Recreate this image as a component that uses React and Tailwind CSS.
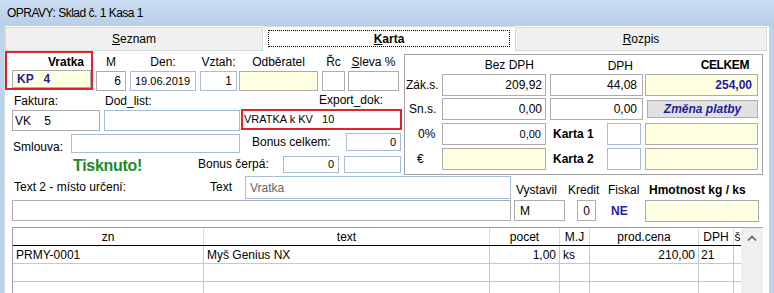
import React from "react";

/* ---------- field helpers ---------- */
const GRAY = "border border-[#acacac]";
const BLUE = "border border-[#a6bcda]";

const Field = ({ className = "", children }) => (
    <div className={"flex items-center overflow-hidden whitespace-pre " + className}>{children}</div>
);

const Col = ({ className = "", label, children }) => (
    <div className={"flex flex-col " + className}>
        <div className="h-[20px] pt-[2px] flex items-center justify-center whitespace-pre">{label}</div>
        {children}
    </div>
);

const Tab = ({ className = "", children }) => (
    <div className={"flex items-center justify-center " + className}>{children}</div>
);

const cols = "grid grid-cols-[191px_286px_70px_30px_109px_35px_8px]";

const rows = [
    { zn: "PRMY-0001", text: "Myš Genius NX", pocet: "1,00", mj: "ks", cena: "210,00", dph: "21" },
    { zn: "", text: "", pocet: "", mj: "", cena: "", dph: "" },
    { zn: "", text: "", pocet: "", mj: "", cena: "", dph: "" },
];

export default function App() {
    return (
        <div className="w-[774px] h-[293px] overflow-hidden bg-[#bcd3ec] flex flex-col text-black text-[12px] leading-none font-['Liberation_Sans',Arial,sans-serif]">
            {/* Title bar */}
            <div className="h-[26px] shrink-0 pl-[7px] flex items-center bg-linear-to-b from-[#cbddf2] to-[#b8cfe9] text-[12px] tracking-[-0.5px]">
                OPRAVY: Sklad č. 1 Kasa 1
            </div>

            {/* Window body */}
            <div className="ml-[4px] w-[765px] flex-1 bg-white border-l border-[#d6d6d6] flex flex-col">
                {/* Tabs */}
                <div className="h-[25px] shrink-0 flex items-end">
                    <Tab className="w-[258px] h-[24px] bg-[#f0f0f0] border border-[#d9d9d9]">
                        <span>
                            <span className="underline">S</span>eznam
                        </span>
                    </Tab>
                    <div className="w-[252px] h-[25px] bg-white border-t border-[#d9d9d9] px-[5px] pt-[3px] pb-[4px]">
                        <Tab className="h-full border border-dotted border-black font-bold">
                            <span>
                                <span className="underline">K</span>arta
                            </span>
                        </Tab>
                    </div>
                    <Tab className="w-[252px] h-[24px] bg-[#f0f0f0] border border-[#d9d9d9]">
                        <span>
                            <span className="underline">R</span>ozpis
                        </span>
                    </Tab>
                </div>

                {/* Top section */}
                <div className="flex h-[125px] shrink-0">
                    {/* Left part */}
                    <div className="w-[399px] flex flex-col">
                        {/* Row A */}
                        <div className="flex items-start h-[40px]">
                            <div className="w-[88px] h-[39px] border-2 border-[#e1232b] flex flex-col">
                                <div className="h-[17px] flex items-center justify-end pr-[7px] font-bold">Vratka</div>
                                <Field className={"ml-[5px] w-[79px] h-[18px] pl-[4px] bg-[#ffffe1] font-bold text-[#1e1e9e] " + GRAY}>
                                    KP   4
                                </Field>
                            </div>
                            <Col className="ml-[3px] w-[30px]" label="M">
                                <Field className={"h-[20px] justify-end pr-[4px] " + GRAY}>6</Field>
                            </Col>
                            <Col className="ml-[4px] w-[66px]" label="Den:">
                                <Field className={"h-[20px] pl-[4px] text-[11px] " + BLUE}>19.06.2019</Field>
                            </Col>
                            <Col className="ml-[4px] w-[37px]" label="Vztah:">
                                <Field className={"h-[20px] justify-end pr-[4px] " + BLUE}>1</Field>
                            </Col>
                            <Col className="ml-[2px] w-[79px]" label="Odběratel">
                                <Field className={"h-[20px] bg-[#ffffe1] " + GRAY} />
                            </Col>
                            <Col className="ml-[4px] w-[23px]" label="Řc">
                                <Field className={"h-[20px] " + GRAY} />
                            </Col>
                            <Col
                                className="ml-[3px] w-[51px]"
                                label={
                                    <span>
                                        <span className="underline">S</span>leva %
                                    </span>
                                }
                            >
                                <Field className={"h-[20px] " + GRAY} />
                            </Col>
                        </div>

                        {/* Row B */}
                        <div className="flex items-start h-[40px]">
                            <div className="ml-[7px] w-[88px] flex flex-col">
                                <div className="h-[19px] flex items-center pl-[2px]">Faktura:</div>
                                <Field className={"h-[21px] pl-[2px] " + GRAY}>VK    5</Field>
                            </div>
                            <div className="ml-[4px] w-[136px] flex flex-col">
                                <div className="h-[19px] flex items-center pl-[1px]">Dod_list:</div>
                                <Field className={"h-[21px] " + BLUE} />
                            </div>
                            <div className="ml-[1px] w-[161px] flex flex-col">
                                <div className="h-[18px] flex items-center justify-end pr-[19px]">Export_dok:</div>
                                <Field className="h-[21px] pl-[1px] border-2 border-[#e1232b] text-[11px]">VRATKA k KV   10</Field>
                            </div>
                        </div>

                        {/* Row C */}
                        <div className="flex items-start h-[23px]">
                            <div className="ml-[8px] w-[58px] mt-[8px] h-[16px] flex items-center">Smlouva:</div>
                            <Field className={"mt-[3px] w-[169px] h-[19px] " + BLUE} />
                            <div className="ml-[12px] w-[94px] mt-[3px] h-[16px] flex items-center">Bonus celkem:</div>
                            <Field className={"mt-[2px] w-[55px] h-[18px] justify-end pr-[4px] text-[11px] " + BLUE}>0</Field>
                        </div>

                        {/* Row D */}
                        <div className="flex items-start h-[22px]">
                            <div className="ml-[68px] w-[125px] mt-[2px] h-[20px] flex items-center font-bold text-[16px] tracking-[-0.3px] text-[#23882a]">
                                Tisknuto!
                            </div>
                            <div className="w-[85px] mt-[2px] h-[16px] flex items-center">Bonus čerpá:</div>
                            <Field className={"mt-[2px] w-[56px] h-[17px] justify-end pr-[4px] text-[11px] " + BLUE}>0</Field>
                            <Field className={"ml-[5px] mt-[2px] w-[57px] h-[17px] " + BLUE} />
                        </div>
                    </div>

                    {/* Totals box */}
                    <div className="mt-[3px] w-[359px] h-[121px] border border-[#a0a0a0] flex flex-col">
                        <div className="h-[19px] flex">
                            <div className="w-[37px]" />
                            <div className="w-[104px] flex items-center justify-end pr-[12px]">Bez DPH</div>
                            <div className="ml-[4px] w-[93px] flex items-center justify-end pr-[10px] pt-[3px]">DPH</div>
                            <div className="ml-[2px] w-[113px] flex items-center justify-end pr-[9px] font-bold tracking-[-0.4px]">CELKEM</div>
                        </div>
                        <div className="h-[22px] flex items-center">
                            <div className="w-[37px] pl-[1px]">Zák.s.</div>
                            <Field className={"w-[104px] h-[22px] justify-end pr-[3px] " + GRAY}>209,92</Field>
                            <Field className={"ml-[4px] w-[93px] h-[22px] justify-end pr-[5px] " + GRAY}>44,08</Field>
                            <Field className={"ml-[2px] w-[113px] h-[22px] justify-end pr-[5px] bg-[#ffffe1] font-bold text-[#1e1e9e] " + GRAY}>
                                254,00
                            </Field>
                        </div>
                        <div className="mt-[2px] h-[22px] flex items-center">
                            <div className="w-[37px] pl-[4px]">Sn.s.</div>
                            <Field className={"w-[104px] h-[22px] justify-end pr-[3px] " + GRAY}>0,00</Field>
                            <Field className={"ml-[4px] w-[93px] h-[22px] justify-end pr-[5px] " + GRAY}>0,00</Field>
                            <div className="ml-[4px] w-[111px] h-[18px] bg-[#e1e1e1] border border-[#adadad] flex items-center justify-center font-bold italic text-[#1e1e9e]">
                                Změna platby
                            </div>
                        </div>
                        <div className="mt-[3px] h-[22px] flex items-center">
                            <div className="w-[37px] pl-[13px]">0%</div>
                            <Field className={"w-[104px] h-[22px] justify-end pr-[4px] text-[11px] " + GRAY}>0,00</Field>
                            <div className="w-[61px] pl-[7px] font-bold">Karta 1</div>
                            <Field className={"w-[34px] h-[22px] " + BLUE} />
                            <Field className={"ml-[4px] w-[113px] h-[22px] bg-[#ffffe1] " + GRAY} />
                        </div>
                        <div className="mt-[3px] h-[22px] flex items-center">
                            <div className="w-[37px] pl-[12px]">€</div>
                            <Field className={"w-[104px] h-[22px] bg-[#ffffe1] " + GRAY} />
                            <div className="w-[61px] pl-[7px] font-bold">Karta 2</div>
                            <Field className={"w-[34px] h-[22px] " + BLUE} />
                            <Field className={"ml-[4px] w-[113px] h-[22px] bg-[#ffffe1] " + GRAY} />
                        </div>
                    </div>
                </div>

                {/* Row E */}
                <div className="flex items-start h-[24px] shrink-0">
                    <div className="ml-[9px] w-[196px] h-[22px] flex items-center">Text 2 - místo určení:</div>
                    <div className="w-[35px] h-[22px] flex items-center">Text</div>
                    <Field className={"w-[266px] h-[23px] pl-[4px] text-[#666] " + BLUE}>Vratka</Field>
                    <div className="ml-[5px] mt-[3px] h-[22px] flex items-center">
                        <div className="w-[52px]">Vystavil</div>
                        <div className="w-[40px]">Kredit</div>
                        <div className="w-[41px]">Fiskal</div>
                        <div className="font-bold">Hmotnost kg / ks</div>
                    </div>
                </div>

                {/* Row F */}
                <div className="flex items-start h-[22px] shrink-0">
                    <Field className={"ml-[7px] w-[499px] h-[21px] " + GRAY} />
                    <Field className={"ml-[3px] w-[51px] h-[21px] pl-[5px] " + GRAY}>M</Field>
                    <Field className={"ml-[12px] w-[19px] h-[21px] justify-center " + GRAY}>0</Field>
                    <div className="ml-[15px] w-[34px] h-[21px] flex items-center font-bold text-[#1e1e9e]">NE</div>
                    <Field className={"w-[114px] h-[22px] bg-[#ffffe1] " + GRAY} />
                </div>

                {/* Grid */}
                <div className="mt-[5px] ml-[7px] w-[751px] flex flex-1 min-h-0 overflow-hidden">
                    <div className="w-[729px] border-t border-l border-[#a0a0a0] flex flex-col">
                        <div className={cols + " h-[18px] shrink-0 border-b border-black"}>
                            {["zn", "text", "pocet", "M.J", "prod.cena", "DPH", "š"].map((h, i) => (
                                <div
                                    key={i}
                                    className="border-r border-[#dcdcdc] flex items-center justify-center overflow-hidden whitespace-nowrap"
                                >
                                    {h}
                                </div>
                            ))}
                        </div>
                        {rows.map((r, i) => (
                            <div key={i} className={cols + " h-[18px] shrink-0 border-b border-[#c8c8c8]"}>
                                <div className="border-r border-[#c8c8c8] flex items-center pl-[3px]">{r.zn}</div>
                                <div className="border-r border-[#c8c8c8] flex items-center pl-[3px]">{r.text}</div>
                                <div className="border-r border-[#c8c8c8] flex items-center justify-end pr-[3px]">{r.pocet}</div>
                                <div className="border-r border-[#c8c8c8] flex items-center pl-[3px]">{r.mj}</div>
                                <div className="border-r border-[#c8c8c8] flex items-center justify-end pr-[3px]">{r.cena}</div>
                                <div className="border-r border-[#c8c8c8] flex items-center pl-[2px]">{r.dph}</div>
                                <div className="border-r border-[#c8c8c8]" />
                            </div>
                        ))}
                    </div>
                    {/* Scrollbar */}
                    <div className="w-[22px] border-t border-[#a0a0a0] bg-[#f0f0f0] flex justify-center">
                        <svg className="mt-[7px]" width="10" height="7" viewBox="0 0 10 7" fill="none">
                            <path d="M1 5.5L5 1.5L9 5.5" stroke="#606060" strokeWidth="1.6" />
                        </svg>
                    </div>
                </div>
            </div>
        </div>
    );
}
